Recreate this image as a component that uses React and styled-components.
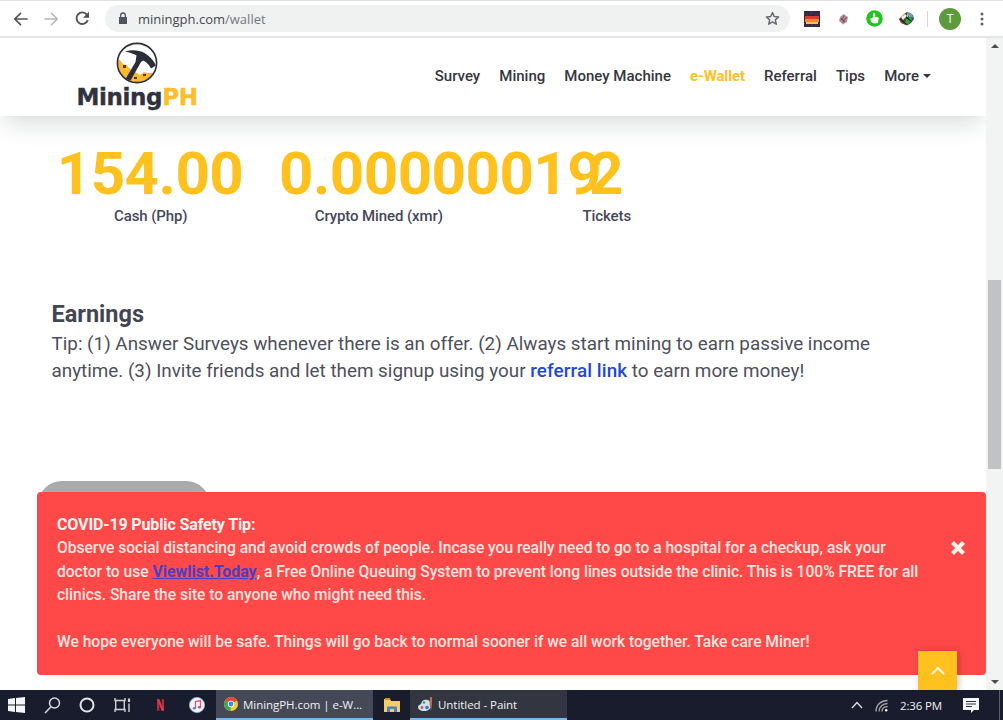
import React from 'react';
import styled, { createGlobalStyle } from 'styled-components';

const GlobalStyle = createGlobalStyle`
  * { box-sizing: border-box; }
  body { margin: 0; overflow: hidden; background: #fff; }
  svg { display: block; flex: none; }
`;

const Screen = styled.div`
  position: relative;
  display: flex;
  flex-direction: column;
  width: 1003px;
  height: 720px;
  overflow: hidden;
  background: #fff;
  font-family: Roboto, 'Liberation Sans', sans-serif;
  color: #434654;
`;

/* Browser toolbar */
const Toolbar = styled.div`
  display: flex;
  align-items: center;
  flex: none;
  height: 38px;
  padding: 0 14px 0 13px;
  border-top: 1px solid #dfe1e3;
  border-bottom: 2px solid #e6e8e8;
  background: #fff;
`;

const NavIcons = styled.div`
  display: flex;
  align-items: center;
  gap: 16px;
  width: 92px;
`;

const AddressBar = styled.div`
  display: flex;
  align-items: center;
  width: 685px;
  height: 27px;
  padding: 0 10px 0 13px;
  border-radius: 14px;
  background: #f0f2f2;
`;

const Url = styled.span`
  flex: 1;
  margin-left: 10px;
  font-family: 'Open Sans', 'Noto Sans', sans-serif;
  font-size: 13px;
  color: #74787e;
  b { font-weight: 400; color: #44474d; }
`;

const Extensions = styled.div`
  display: flex;
  align-items: center;
  gap: 15px;
  margin-left: 14px;
`;

const Divider = styled.div`
  width: 1px;
  height: 16px;
  margin: 0 11px 0 12px;
  background: #d4d6d8;
`;

const Avatar = styled.div`
  width: 22px;
  height: 22px;
  border-radius: 50%;
  background: #5d9a3b;
  color: #e9f5e2;
  font-size: 12px;
  line-height: 22px;
  text-align: center;
`;

const MenuDots = styled.div`
  margin-left: auto;
  margin-right: 5px;
`;

/* Page */
const Viewport = styled.div`
  display: flex;
  flex: 1;
  min-height: 0;
`;

const Page = styled.div`
  position: relative;
  width: 986px;
  overflow: hidden;
`;

const Header = styled.header`
  position: relative;
  display: flex;
  justify-content: space-between;
  height: 78px;
  padding: 0 55px 0 76px;
  background: #fff;
  box-shadow: 0 10px 24px -4px rgba(30, 45, 45, 0.18);
`;

const Logo = styled.div`
  display: flex;
  flex-direction: column;
  align-items: center;
  width: 122px;
  padding-top: 4px;
`;

const LogoText = styled.div`
  font-family: 'DejaVu Sans', Verdana, sans-serif;
  font-weight: 700;
  font-size: 23px;
  line-height: 27px;
  letter-spacing: -0.35px;
  white-space: nowrap;
  color: #30323f;
  -webkit-text-stroke: 0.4px currentColor;
  span { color: #febd2b; }
`;

const Menu = styled.nav`
  display: flex;
  align-items: center;
  gap: 19.1px;
  padding-bottom: 2px;
`;

const MenuItem = styled.a`
  display: flex;
  align-items: center;
  gap: 4px;
  font-size: 15px;
  font-weight: ${props => props.$active ? 700 : 500};
  letter-spacing: ${props => props.$active ? '-0.15px' : '0'};
  color: ${props => props.$active ? '#ffc125' : '#35363f'};
`;

const Caret = styled.span`
  border: 4px solid transparent;
  border-top-color: #35363f;
  border-bottom: 0;
`;

const Stats = styled.section`
  display: flex;
  padding: 28px 0 0 36px;
`;

const Stat = styled.div`
  width: 228px;
  padding: 0 15px;
  text-align: center;
  white-space: nowrap;
`;

const StatValue = styled.div`
  font-size: 60px;
  font-weight: 700;
  line-height: 60px;
  letter-spacing: -0.5px;
  color: #ffc11e;
`;

const StatLabel = styled.div`
  margin-top: 2px;
  padding-left: 1.5px;
  font-size: 15px;
  font-weight: 500;
  line-height: 20px;
  letter-spacing: -0.1px;
  color: #45485a;
`;

const Earnings = styled.section`
  padding: 74px 0 0 51.5px;
`;

const Title = styled.h2`
  margin: 0;
  font-size: 23.5px;
  font-weight: 700;
  line-height: 28px;
  color: #434652;
`;

const Tip = styled.p`
  margin: 2.5px 0 0;
  font-size: 18.83px;
  line-height: 27.5px;
  white-space: nowrap;
  color: #4d505c;
  a { font-weight: 500; letter-spacing: 0.1px; color: #1f49d6; }
`;

const GreyPill = styled.div`
  width: 172px;
  height: 48px;
  margin: 95.5px 0 0 38px;
  border-radius: 24px;
  background: #a9abac;
`;

const Alert = styled.div`
  position: absolute;
  left: 37px;
  bottom: 15px;
  display: flex;
  justify-content: space-between;
  width: 949px;
  height: 183px;
  padding: 21px 21px 0 20px;
  border-radius: 4px;
  background: #ff4848;
`;

const AlertText = styled.div`
  font-size: 15.6px;
  font-weight: 500;
  line-height: 23.5px;
  white-space: pre;
  color: #ffe6e1;
  strong { font-size: 16px; font-weight: 700; letter-spacing: -0.13px; color: #fff6f3; }
  a { font-size: 15.9px; font-weight: 700; letter-spacing: 0; color: #4a3fc4; text-decoration: underline; }
`;

const AlertLine = styled.div`
  height: 23.5px;
  letter-spacing: -0.02px;
`;

const CloseIcon = styled.div`
  margin-top: 28px;
`;

const ScrollTop = styled.div`
  position: absolute;
  left: 918px;
  bottom: 0;
  display: flex;
  align-items: center;
  justify-content: center;
  width: 39px;
  height: 39px;
  background: #ffc11e;
  box-shadow: 2px 0 7px rgba(70, 0, 0, 0.22);
`;

const Scrollbar = styled.div`
  display: flex;
  flex-direction: column;
  align-items: center;
  justify-content: space-between;
  width: 17px;
  padding: 6px 0;
  background: #f2f3f3;
`;

const Thumb = styled.div`
  width: 13px;
  height: 189px;
  margin-top: 20px;
  background: #c1c2c3;
`;

const Arrow = styled.div`
  border: 4px solid transparent;
  ${props => props.$up
    ? 'border-bottom-color: #4b4d50; border-top: 0;'
    : 'border-top-color: #4b4d50; border-bottom: 0;'}
`;

/* Taskbar */
const Taskbar = styled.div`
  display: flex;
  align-items: center;
  flex: none;
  height: 30px;
  background: #191c2c;
  font-family: 'Open Sans', 'Noto Sans', sans-serif;
  font-size: 11.5px;
  color: #f1f2f4;
`;

const TaskIcons = styled.div`
  display: flex;
  align-items: center;
  flex: none;
  width: 216px;
  padding-left: 8px;
`;

const TaskIcon = styled.div`
  display: flex;
  flex: none;
  justify-content: center;
  width: ${props => props.$w}px;
`;

const TaskWindow = styled.div`
  display: flex;
  align-items: center;
  gap: 5px;
  width: 157px;
  height: 30px;
  padding: 0 8px;
  border-bottom: 2px solid #76b9ed;
  background: ${props => props.$active ? '#454856' : '#333541'};
  letter-spacing: -0.05px;
  white-space: nowrap;
`;

const Tray = styled.div`
  display: flex;
  align-items: center;
  gap: 12px;
  height: 30px;
  margin: 0 3px 0 auto;
  padding-right: 20px;
  border-right: 1px solid #5b5e6b;
`;

const Clock = styled.span`
  margin-right: 9px;
  letter-spacing: -0.15px;
`;

const stroke = { fill: 'none', strokeLinecap: 'round', strokeLinejoin: 'round' };

const LogoMark = () => (
  <svg width="42" height="42" viewBox="0 0 42 42">
    <defs>
      <clipPath id="coin"><circle cx="21" cy="21" r="19" /></clipPath>
    </defs>
    <circle cx="21" cy="21" r="19.5" fill="#fff" />
    <g clipPath="url(#coin)">
      <path d="M0 17 L4 18 L7 22 L11 23 L13 26 L17 29 L21 31 L24 33 L28 30 L32 31 L37 31 L37 42 L0 42Z" fill="#fdb92e" />
      <path d="M7 23h3v3H7zM18 35h3v2h-3zM27 32h3v2h-3z" fill="#4d3b25" />
      <path d="M9 9.500 C16 7.500 23 8 28.500 11 C33 13.500 37 17.500 40 23.500 L35 26.500 C33 22.500 30.500 20.500 27.500 18.500 C25 19 24.500 21 23 23.500 L14 39.500 L9.500 37 L19.500 20 L20.500 13.500 C17.500 11.500 14 10.500 9 9.500Z" fill="#2b2d38" />
    </g>
    <circle cx="21" cy="21" r="19.600" fill="none" stroke="#2b2d38" strokeWidth="1.600" />
  </svg>
);

const App = () => (
  <Screen>
    <GlobalStyle />
    <Toolbar>
      <NavIcons>
        <svg width="15" height="14" viewBox="0 0 15 14" {...stroke} stroke="#505358" strokeWidth="1.7"><path d="M14 7H2M7.5 1.3L1.7 7l5.8 5.7" /></svg>
        <svg width="15" height="14" viewBox="0 0 15 14" {...stroke} stroke="#b3b5b8" strokeWidth="1.5"><path d="M1 7h12M7.5 1.3L13.3 7l-5.8 5.7" /></svg>
        <svg width="15" height="15" viewBox="0 0 15 15" fill="none" stroke="#505358" strokeWidth="1.9"><path d="M12.8 9.2A5.8 5.8 0 1 1 11.9 3.6" /><path d="M14 .8v6H8z" fill="#505358" stroke="none" /></svg>
      </NavIcons>
      <AddressBar>
        <svg width="10" height="13" viewBox="0 0 10 13"><path d="M1 5h8v7H1z" fill="#53555e" /><path d="M2.7 5V3.3a2.3 2.3 0 0 1 4.6 0V5" fill="none" stroke="#53555e" strokeWidth="1.3" /></svg>
        <Url><b>miningph.com</b>/wallet</Url>
        <svg width="15" height="15" viewBox="0 0 24 24" {...stroke} stroke="#66696f" strokeWidth="2.4"><path d="M12 2.5l2.8 6.4 7 .7-5.300 4.600 1.600 6.900L12 17.500 5.900 21.100l1.600-6.900L2.200 9.600l7-.7z" /></svg>
      </AddressBar>
      <Extensions>
        <svg width="16" height="16" viewBox="0 0 16 16">
          <path d="M0 0h16v16H0z" fill="#322b43" />
          <path d="M1 5h14v4H1z" fill="#d83a34" />
          <path d="M1 8h14v3H1z" fill="#f7842f" />
          <path d="M2 11h12v2H2z" fill="#f3c64b" />
          <path d="M2 3h2M6 2h3M11 3h3M4 13v2M8 13v2M12 13v2" stroke="#5d315a" />
        </svg>
        <svg width="16" height="16" viewBox="0 0 16 16"><path d="M8.500 3l4.500 3-1 5-4 2.500-4-3.500 1-4z" fill="#b09aa2" /><path d="M6 7l4 4M9.500 4.500l-4 5M11.500 6.500l-4 5" stroke="#8b4a5a" strokeWidth="1.200" /></svg>
        <svg width="17" height="17" viewBox="0 0 17 17">
          <circle cx="8.500" cy="8.500" r="8.300" fill="#22c51d" />
          <path d="M5 8.200l2.200-1V4c0-1.500 2-1.500 2 0v3l2.500.3c1 .2 1.300.9 1 1.700l-.7 3c-.2.800-.7 1.200-1.500 1.200H7.300c-1 0-1.700-.5-2-1.400L4.300 9.500c-.2-.6 0-1.100.7-1.300z" fill="#fff" />
        </svg>
        <svg width="17" height="16" viewBox="0 0 17 16">
          <path d="M1 8l5-5 3-2 6 3 1 4-3 4-4 2.500-5-2z" fill="#4a4d4c" />
          <path d="M10 1.500c3 0 5 2 5 4.500l-4 .5z" fill="#5c9ddd" />
          <path d="M3 6l4-3 2 2-4 4z" fill="#eceee8" />
          <path d="M8 8l5-2 1 3-4 4-5-1 3-2z" fill="#21b431" />
          <path d="M9 2l2 2-2 3z" fill="#efb53a" />
          <path d="M1 8l3 1 3 4-4-1z" fill="#b23a32" />
          <path d="M2 8l6 5M8 6l5 4" stroke="#202423" strokeWidth="1.3" />
        </svg>
      </Extensions>
      <Divider />
      <Avatar>T</Avatar>
      <MenuDots>
        <svg width="4" height="14" viewBox="0 0 4 14" fill="#606368"><circle cx="2" cy="2" r="1.500" /><circle cx="2" cy="7" r="1.500" /><circle cx="2" cy="12" r="1.500" /></svg>
      </MenuDots>
    </Toolbar>

    <Viewport>
      <Page>
        <Header>
          <Logo>
            <LogoMark />
            <LogoText>Mining<span>PH</span></LogoText>
          </Logo>
          <Menu>
            <MenuItem>Survey</MenuItem>
            <MenuItem>Mining</MenuItem>
            <MenuItem>Money Machine</MenuItem>
            <MenuItem $active>e-Wallet</MenuItem>
            <MenuItem>Referral</MenuItem>
            <MenuItem>Tips</MenuItem>
            <MenuItem>More <Caret /></MenuItem>
          </Menu>
        </Header>

        <Stats>
          <Stat>
            <StatValue>154.00</StatValue>
            <StatLabel>Cash (Php)</StatLabel>
          </Stat>
          <Stat>
            <StatValue>0.00000019</StatValue>
            <StatLabel>Crypto Mined (xmr)</StatLabel>
          </Stat>
          <Stat>
            <StatValue>2</StatValue>
            <StatLabel>Tickets</StatLabel>
          </Stat>
        </Stats>

        <Earnings>
          <Title>Earnings</Title>
          <Tip>
            Tip: (1) Answer Surveys whenever there is an offer. (2) Always start mining to earn passive income<br />
            anytime. (3) Invite friends and let them signup using your <a>referral link</a> to earn more money!
          </Tip>
        </Earnings>

        <GreyPill />

        <Alert>
          <AlertText>
            <AlertLine><strong>COVID-19 Public Safety Tip:</strong></AlertLine>
            <AlertLine>Observe social distancing and avoid crowds of people. Incase you really need to go to a hospital for a checkup, ask your</AlertLine>
            <AlertLine>doctor to use <a>Viewlist.Today</a>, a Free Online Queuing System to prevent long lines outside the clinic. This is 100% FREE for all</AlertLine>
            <AlertLine>clinics. Share the site to anyone who might need this.</AlertLine>
            <AlertLine />
            <AlertLine>We hope everyone will be safe. Things will go back to normal sooner if we all work together. Take care Miner!</AlertLine>
          </AlertText>
          <CloseIcon>
            <svg width="14" height="14" viewBox="0 0 14 14" stroke="#fff4ef" strokeWidth="4"><path d="M1.500 1.500l11 11M12.500 1.500l-11 11" /></svg>
          </CloseIcon>
        </Alert>
        <ScrollTop>
          <svg width="14" height="9" viewBox="0 0 14 9" fill="none" stroke="#fff6dc" strokeWidth="2"><path d="M1 8l6-6 6 6" /></svg>
        </ScrollTop>
      </Page>

      <Scrollbar>
        <Arrow $up />
        <Thumb />
        <Arrow />
      </Scrollbar>
    </Viewport>

    <Taskbar>
      <TaskIcons>
        <TaskIcon $w={17}>
          <svg width="17" height="16" viewBox="0 0 17 16" fill="#f5f6f8"><path d="M0 2l7-1v6.500H0zM8 .9L17 0v7.500H8zM0 8.500h7V15l-7-1zM8 8.500h9V16l-9-1z" /></svg>
        </TaskIcon>
        <TaskIcon $w={55}>
          <svg width="17" height="17" viewBox="0 0 17 17" fill="none" stroke="#d6d8dc" strokeWidth="1.500"><circle cx="10.500" cy="6" r="5" /><path d="M7 9.800L1 16" /></svg>
        </TaskIcon>
        <TaskIcon $w={14}>
          <svg width="16" height="16" viewBox="0 0 16 16" fill="none" stroke="#e2e4e6" strokeWidth="2"><circle cx="8" cy="8" r="6.500" /></svg>
        </TaskIcon>
        <TaskIcon $w={57}>
          <svg width="17" height="16" viewBox="0 0 17 16" fill="none" stroke="#d1d3d7" strokeWidth="1.400"><path d="M1 1v2.500h10V1M1 15v-2.500h10V15M1.700 4v8M10.300 4v8" /><path d="M15 6.500V15" /><path d="M15 1.500v3.500" strokeWidth="2.200" /></svg>
        </TaskIcon>
        <TaskIcon $w={19}>
          <svg width="7" height="12" viewBox="0 0 8 13"><path d="M0 0h2.700v13H0zM5.300 0H8v13H5.300z" fill="#b32c3e" /><path d="M0 0h2.700L8 13H5.300z" fill="#d83c4b" /></svg>
        </TaskIcon>
        <TaskIcon $w={53}>
          <svg width="16" height="16" viewBox="0 0 16 16"><circle cx="8" cy="8" r="7.600" fill="#f4f4f8" stroke="#8fb4e4" strokeWidth=".8" /><path d="M6.500 11V4.500l5-1v6.700" fill="none" stroke="#e0566f" strokeWidth="1.300" /><ellipse cx="5.400" cy="11.200" rx="1.600" ry="1.200" fill="#5f7fd8" /><ellipse cx="10.400" cy="10.300" rx="1.600" ry="1.200" fill="#dc4b6b" /></svg>
        </TaskIcon>
      </TaskIcons>
      <TaskWindow $active>
        <svg width="14" height="14" viewBox="0 0 14 14">
          <circle cx="7" cy="7" r="7" fill="#f4cc36" />
          <path d="M7 7L1 3.500a7 7 0 0 1 12.100.1z" fill="#dc4b3d" />
          <path d="M7 7l-.5 7A7 7 0 0 1 1 3.500z" fill="#3ea65a" />
          <circle cx="7" cy="7" r="3.200" fill="#fff" /><circle cx="7" cy="7" r="2.400" fill="#4c86e5" />
        </svg>
        MiningPH.com | e-W...
      </TaskWindow>
      <TaskIcon $w={37}>
        <svg width="16" height="14" viewBox="0 0 16 14"><path d="M0 1h6l1 2h9v11H0z" fill="#f4ce64" /><path d="M1 0h5v2H1z" fill="#cf8d35" /><path d="M3 14V8.500h10V14h-3v-3H6v3z" fill="#4b82c5" /></svg>
      </TaskIcon>
      <TaskWindow>
        <svg width="15" height="15" viewBox="0 0 15 15"><path d="M6 3c4-1 7 1 7 5s-3 6-7 6-6-2-6-4 2-2 3-3 0-3 3-4z" fill="#cfe0f2" /><circle cx="6" cy="5.500" r="1.300" fill="#43a55d" /><circle cx="4" cy="10.500" r="1.400" fill="#e0503f" /><circle cx="9" cy="10.500" r="1.800" fill="#3477c9" /><path d="M12 0h2v7l-1 7-1.500-7z" fill="#bd6f45" /></svg>
        Untitled - Paint
      </TaskWindow>
      <Tray>
        <svg width="12" height="8" viewBox="0 0 12 8" fill="none" stroke="#dfe1e5" strokeWidth="1.300"><path d="M1 7l5-5.500L11 7" /></svg>
        <svg width="13" height="13" viewBox="0 0 13 13" fill="none" stroke="#a9a5a8" strokeWidth="1.400"><path d="M1 12.500C1 6 6 1.500 12.500 1.500M4 12.500c0-4.500 4-8 8.500-8M7 12.500c0-3 2.500-5 5.500-5" /><circle cx="11.200" cy="11.300" r="1.200" fill="#fff" stroke="none" /></svg>
        <Clock>2:36 PM</Clock>
        <svg width="16" height="16" viewBox="0 0 16 16"><path d="M0 1h16v12h-5l-3 3v-3H0z" fill="#f7f8fa" /><path d="M3 4.500h10M3 7h10M3 9.500h6" stroke="#292c3b" strokeWidth="1.100" /></svg>
      </Tray>
    </Taskbar>
  </Screen>
);

export default App;
